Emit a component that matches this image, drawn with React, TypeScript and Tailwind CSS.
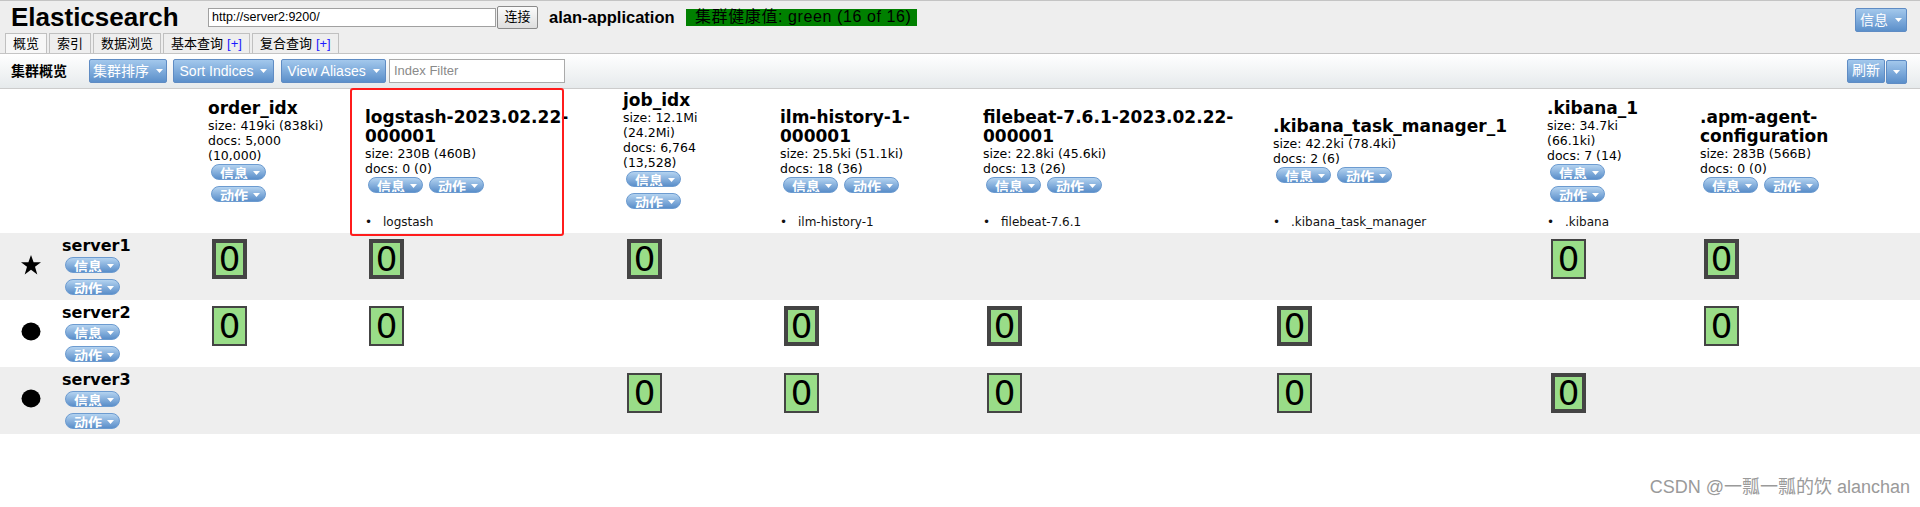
import React from "react"

const SANS = "font-['DejaVu_Sans','Noto_Sans_CJK_SC',sans-serif]"
const ARIAL = "font-['Liberation_Sans','Noto_Sans_CJK_SC',sans-serif]"
const COLS = "grid grid-cols-[204px_157px_258px_157px_203px_290px_274px_153px_224px]"

type Index = {
  title: string[]
  info: string[]
  stacked?: boolean
  alias?: string
}

const indices: Index[] = [
  { title: ["order_idx"], info: ["size: 419ki (838ki)", "docs: 5,000", "(10,000)"], stacked: true },
  { title: ["logstash-2023.02.22-", "000001"], info: ["size: 230B (460B)", "docs: 0 (0)"], alias: "logstash" },
  { title: ["job_idx"], info: ["size: 12.1Mi", "(24.2Mi)", "docs: 6,764", "(13,528)"], stacked: true },
  { title: ["ilm-history-1-", "000001"], info: ["size: 25.5ki (51.1ki)", "docs: 18 (36)"], alias: "ilm-history-1" },
  { title: ["filebeat-7.6.1-2023.02.22-", "000001"], info: ["size: 22.8ki (45.6ki)", "docs: 13 (26)"], alias: "filebeat-7.6.1" },
  { title: [".kibana_task_manager_1"], info: ["size: 42.2ki (78.4ki)", "docs: 2 (6)"], alias: ".kibana_task_manager" },
  { title: [".kibana_1"], info: ["size: 34.7ki", "(66.1ki)", "docs: 7 (14)"], stacked: true, alias: ".kibana" },
  { title: [".apm-agent-", "configuration"], info: ["size: 283B (566B)", "docs: 0 (0)"] },
]

// p = primary (thick border), r = replica
const servers: { name: string; master: boolean; shards: Record<number, "p" | "r"> }[] = [
  { name: "server1", master: true, shards: { 0: "p", 1: "p", 2: "p", 6: "r", 7: "p" } },
  { name: "server2", master: false, shards: { 0: "r", 1: "r", 3: "p", 4: "p", 5: "p", 7: "r" } },
  { name: "server3", master: false, shards: { 2: "r", 3: "r", 4: "r", 5: "r", 6: "p" } },
]

function Caret() {
  return (
    <svg width="7" height="4" viewBox="0 0 7 4" className="shrink-0">
      <path d="M0 0h7L3.5 4z" fill="#fff" />
    </svg>
  )
}

function Pill({ label }: { label: string }) {
  return (
    <div className={`flex h-[16px] w-[55px] items-start gap-[5px] overflow-hidden rounded-full border border-[#6c9bd0] bg-linear-to-b from-[#b4d3f0] to-[#5a8ec9] pl-[8px] text-[14px] font-bold leading-[19px] text-white ${SANS}`}>
      <span>{label}</span>
      <span className="mt-[6px]"><Caret /></span>
    </div>
  )
}

function Btn({ label, className = "" }: { label: string; className?: string }) {
  return (
    <div className={`flex h-[24px] items-center justify-center gap-[7px] rounded-[2px] border border-[#5f8cc4] bg-linear-to-b from-[#a3c8ec] to-[#5b8fca] text-[14px] text-white ${ARIAL} ${className}`}>
      <span>{label}</span>
      <Caret />
    </div>
  )
}

function Shard({ kind }: { kind: "p" | "r" }) {
  return (
    <div
      className={`ml-[8px] mt-[6px] box-border flex h-[40px] w-[35px] items-center justify-center border-[#444] bg-[#99dd88] text-[34px] leading-none text-black ${SANS} ${
        kind === "p" ? "border-[4px]" : "border-[2px]"
      }`}
    >
      0
    </div>
  )
}

export default function App() {
  const tabs = ["概览", "索引", "数据浏览", "基本查询", "复合查询"]

  return (
    <div className={`relative h-[507px] w-[1920px] overflow-hidden bg-white text-black ${SANS}`}>
      {/* header */}
      <div className="box-border h-[54px] border-t border-b border-[#c4c4c4] bg-[#eeeeee]">
        <div className="flex h-[32px] items-center">
          <div className={`w-[208px] pl-[11px] text-[26px] font-bold leading-none ${ARIAL}`}>Elasticsearch</div>
          <div className={`box-border flex h-[19px] w-[288px] items-center border border-[#a0a0a0] bg-white px-[3px] text-[12.5px] ${ARIAL}`}>
            http://server2:9200/
          </div>
          <div className={`ml-[1px] box-border flex h-[23px] w-[41px] items-center justify-center rounded-[2px] border border-[#8a8a8a] bg-linear-to-b from-[#fbfbfb] to-[#dedede] text-[13px] ${ARIAL}`}>
            连接
          </div>
          <div className={`ml-[11px] w-[126px] whitespace-nowrap text-[16.5px] font-bold ${ARIAL}`}>alan-application</div>
          <div className={`ml-[11px] flex h-[17px] w-[231px] items-center whitespace-nowrap bg-[#008000] pl-[9px] text-[16px] leading-none tracking-[0.6px] text-black ${ARIAL}`}>
            集群健康值: green (16 of 16)
          </div>
          <div className="ml-auto mr-[13px] mt-[6px]">
            <Btn label="信息" className="h-[22px] w-[52px]" />
          </div>
        </div>
        <div className="flex h-[20px] items-end gap-[2px] pl-[5px]">
          {tabs.map((t, i) => (
            <div
              key={t}
              className={`box-border flex h-[20px] items-center whitespace-nowrap border border-b-0 border-[#c0c0c0] px-[7px] text-[13px] ${ARIAL} ${
                i === 0 ? "bg-[#f7f7f7]" : "bg-[#eeeeee]"
              }`}
            >
              {t}
              {i > 2 && <span className="ml-[4px] text-[#1a1aff]">[+]</span>}
            </div>
          ))}
        </div>
      </div>

      {/* toolbar */}
      <div className="box-border flex h-[35px] items-center border-b border-[#cccccc] bg-linear-to-b from-white to-[#e6eaec]">
        <div className={`w-[89px] pl-[11px] text-[14px] font-bold ${ARIAL}`}>集群概览</div>
        <Btn label="集群排序" className="w-[78px]" />
        <Btn label="Sort Indices" className="ml-[6px] w-[101px]" />
        <Btn label="View Aliases" className="ml-[7px] w-[105px]" />
        <div className={`ml-[3px] box-border flex h-[24px] w-[176px] items-center border border-[#aaaaaa] bg-white px-[4px] text-[13px] text-[#8a8a8a] ${ARIAL}`}>
          Index Filter
        </div>
        <div className="ml-auto mr-[13px] flex items-start">
          <div className={`box-border flex h-[24px] w-[38px] items-center justify-center rounded-[2px] border border-[#5f8cc4] bg-linear-to-b from-[#a3c8ec] to-[#5b8fca] text-[14px] text-white ${ARIAL}`}>
            刷新
          </div>
          <div className="ml-[1px] mt-[1px] box-border flex h-[24px] w-[21px] items-center justify-center rounded-[2px] border border-[#5f8cc4] bg-linear-to-b from-[#a3c8ec] to-[#5b8fca]">
            <Caret />
          </div>
        </div>
      </div>

      {/* index header */}
      <div className={`${COLS} h-[122px]`}>
        <div />
        {indices.map((ix) => (
          <div key={ix.title.join("")} className="self-center pl-[4px]">
            {ix.title.map((t) => (
              <div key={t} className="whitespace-nowrap text-[17px] font-bold leading-[19px]">{t}</div>
            ))}
            {ix.info.map((t) => (
              <div key={t} className="whitespace-nowrap text-[12.5px] leading-[15px]">{t}</div>
            ))}
            <div className={`ml-[3px] mt-[1px] flex ${ix.stacked ? "flex-col gap-[6px]" : "gap-[6px]"}`}>
              <Pill label="信息" />
              <Pill label="动作" />
            </div>
          </div>
        ))}
      </div>
      <div className={`${COLS} h-[22px] items-center`}>
        <div />
        {indices.map((ix, i) => (
          <div key={i} className="flex items-center pl-[4px] text-[12px] text-[#111]">
            {ix.alias && (
              <>
                <span className="w-[18px]">•</span>
                <span>{ix.alias}</span>
              </>
            )}
          </div>
        ))}
      </div>

      {/* nodes */}
      {servers.map((s, r) => (
        <div key={s.name} className={`${COLS} h-[67px] ${r === 1 ? "bg-white" : "bg-[#eeeeee]"}`}>
          <div className="flex">
            <div className="flex w-[62px] justify-center pt-[22px]">
              {s.master ? (
                <svg width="22" height="20" viewBox="0 0 22 20">
                  <path d="M11 0l2.6 7.2H21l-6 4.6 2.3 7.6L11 14.8l-6.3 4.6L7 11.8 1 7.2h7.4z" fill="#000" />
                </svg>
              ) : (
                <svg width="20" height="19" viewBox="0 0 20 19">
                  <ellipse cx="10" cy="9.5" rx="9.5" ry="9" fill="#000" />
                </svg>
              )}
            </div>
            <div className="pt-[3px]">
              <div className="text-[16px] font-bold leading-[19px]">{s.name}</div>
              <div className="ml-[3px] mt-[2px] flex flex-col gap-[6px]">
                <Pill label="信息" />
                <Pill label="动作" />
              </div>
            </div>
          </div>
          {indices.map((_, c) => (
            <div key={c}>{s.shards[c] && <Shard kind={s.shards[c]} />}</div>
          ))}
        </div>
      ))}

      {/* annotation box */}
      <div className="absolute left-[350px] top-[88px] box-border h-[148px] w-[214px] rounded-[3px] border-2 border-[#ff1c1c]" />

      <div className={`absolute bottom-[6px] right-[10px] text-[18px] text-[#9a9a9a] ${ARIAL}`}>CSDN @一瓢一瓢的饮 alanchan</div>
    </div>
  )
}
